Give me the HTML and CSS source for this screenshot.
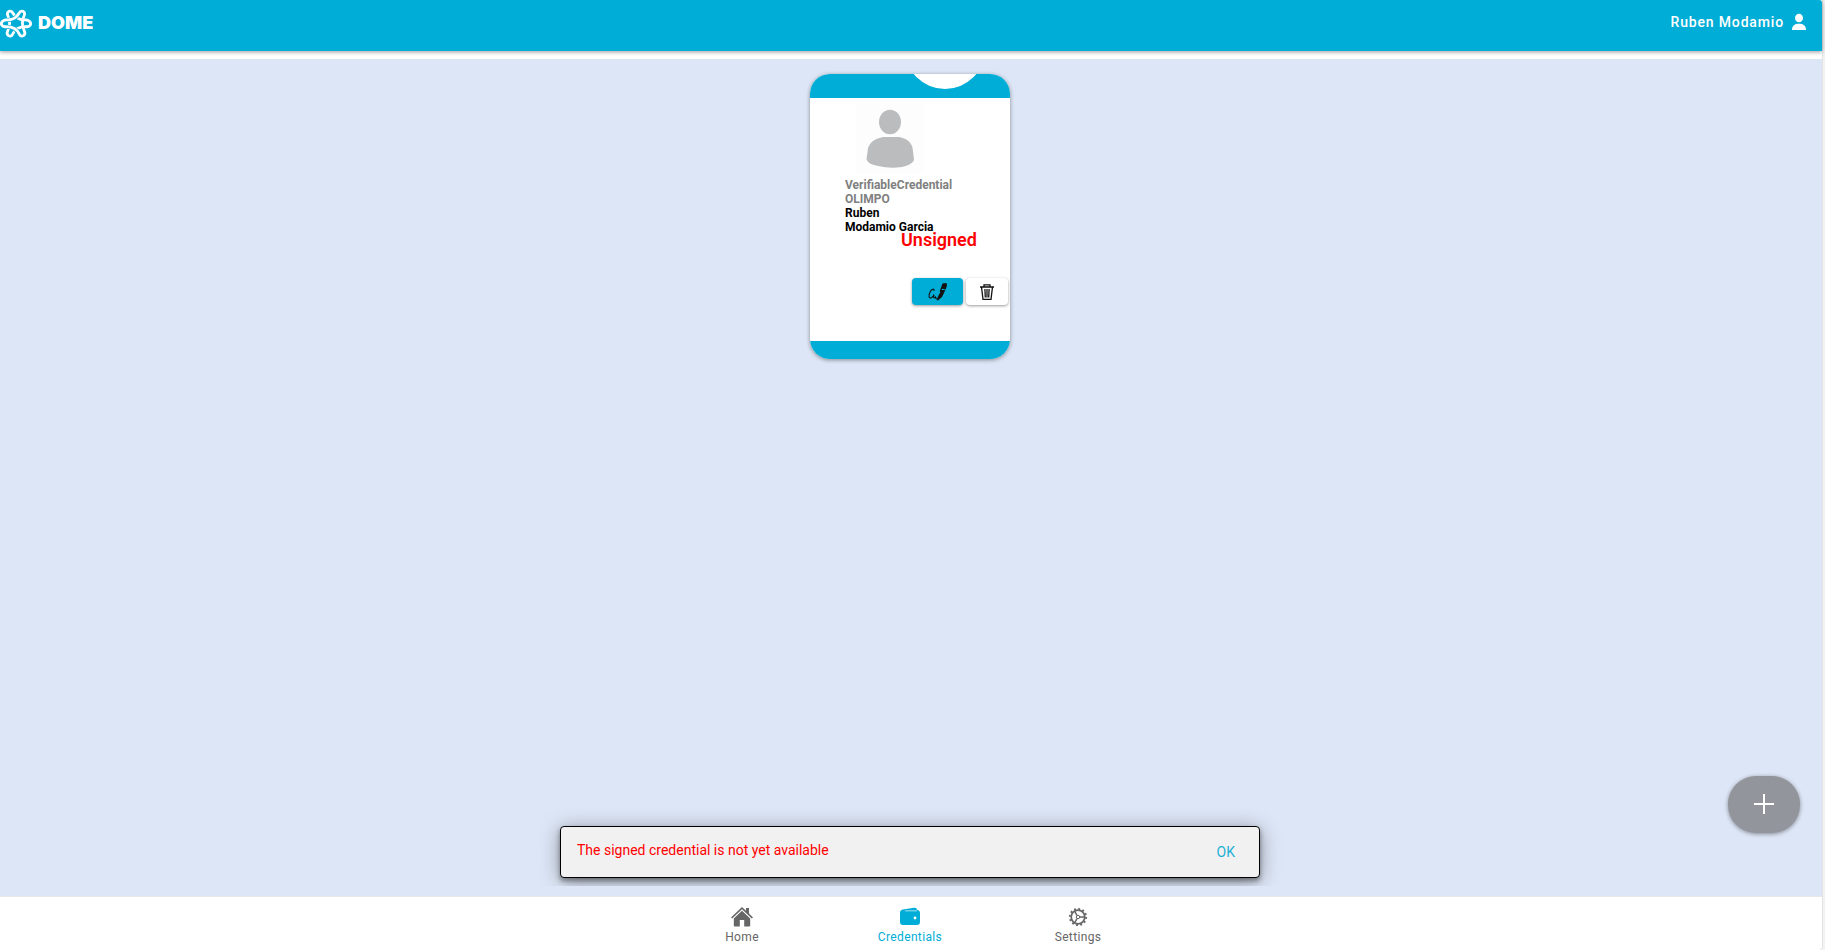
FILE: index.html
```html
<!DOCTYPE html>
<html lang="en">
<head>
<meta charset="utf-8">
<title>DOME Wallet</title>
<link rel="stylesheet" href="styles.css">
</head>
<body>
<div class="app">
  <header class="topbar">
    <a class="brand" href="#">
      <svg class="brand-mark" viewBox="0 -1 32 32" fill="none" stroke-linejoin="round">
        <g stroke="#fff" stroke-width="2.800">
          <path d="M28.500 12.600 Q31.500 14.500 30.300 17 Q29 19.200 26 18.600 Q16 18.500 12.800 26 Q11 29.200 8.500 27.600 Q6.300 26 7.600 23.300 Q11.500 15 7.800 7.500 Q6.600 4.300 9 3.300 Q11.700 2.500 13 5.300 Q17 12.500 25.500 11.800 Q27.500 11.800 28.500 12.600Z"/>
        </g>
        <g stroke="#00add6" stroke-width="4.200">
          <path d="M3.500 12.600 Q5 11.800 7 12 Q15.500 12 19 5.300 Q20.500 2.500 23 3.300 Q25.500 4.300 24.200 7.500"/>
          <path d="M24.400 23.300 Q25.700 26 23.500 27.600 Q21 29.200 19.200 26 Q16 19 6 18.600"/>
        </g>
        <g stroke="#fff" stroke-width="2.800">
          <path d="M3.500 12.600 Q.5 14.500 1.700 17 Q3 19.200 6 18.600 Q16 18.500 19.200 26 Q21 29.200 23.500 27.600 Q25.700 26 24.400 23.300 Q20.500 15 24.200 7.500 Q25.400 4.300 23 3.300 Q20.300 2.500 19 5.300 Q15 12.500 6.500 11.800 Q4.500 11.800 3.500 12.600Z"/>
        </g>
      </svg>
      <span>DOME</span>
    </a>
    <button class="user" type="button">
      <span>Ruben Modamio</span>
      <svg viewBox="0 0 16 18" width="16" height="18" fill="#fff"><ellipse cx="8" cy="5" rx="4" ry="4.300"/><path d="M1 17 C1 12.500 4 10.800 8 10.800 S15 12.500 15 17Z"/></svg>
    </button>
  </header>

  <main class="content">
    <article class="card">
      <div class="card-head"><span class="disc"></span></div>
      <div class="card-body">
        <svg class="avatar" viewBox="0 0 68 69" role="img" aria-label="Profile picture">
          <rect width="68" height="69" fill="#fdfdfd"/>
          <g fill="#bbbcbe"><ellipse cx="34" cy="18" rx="11" ry="12.200"/><path d="M27 33 H43 Q56 35 57 47 L58 56 Q56 61 46 63 Q34 65 22 62 Q11 60 10.500 55 L11.500 48 Q12 36 27 33Z"/></g>
        </svg>
        <p class="kind">VerifiableCredential</p>
        <p class="kind">OLIMPO</p>
        <p>Ruben</p>
        <p>Modamio Garcia</p>
        <strong class="status">Unsigned</strong>
        <div class="actions">
          <button class="sign" type="button" aria-label="Sign">
            <svg viewBox="0 0 20 20" width="20" height="20"><path fill="none" stroke="#111" stroke-width="1.100" d="M6 9 C6.500 6 3.500 7 2.300 9.500 C.5 13 .5 16.500 3 16 C5 15.500 6 12.500 6 12.500 C5 16 6 16.500 7.500 15 C8 17 9 17.500 10 16.500"/><path fill="#111" d="M14.500 1.500 L18.500 1 L19 3.500 L17.700 7.500 L14.200 6.800 L12.600 10 L11.600 9.500Z M13.600 7.700 L17.300 8.300 L14 15 L9.300 19 L9.700 15Z"/></svg>
          </button>
          <button class="trash" type="button" aria-label="Delete">
            <svg viewBox="0 0 16 18" width="16" height="18" fill="none" stroke="#111" stroke-width="1.300"><path d="M1 4 H15 M5 4 V1.800 H11 V4 M2.500 4 L4 16.300 H12 L13.500 4 M5.900 6 L6.300 14.500 M8 6 V14.500 M10.100 6 L9.700 14.500"/></svg>
          </button>
        </div>
      </div>
      <div class="card-foot"></div>
    </article>
    <button class="fab" type="button" aria-label="Add credential">
      <svg viewBox="0 0 20 20" width="20" height="20" stroke="#fff" stroke-width="2"><path d="M10 0V20M0 10H20"/></svg>
    </button>
    <div class="toast-area">
      <div class="toast" role="alert"><span>The signed credential is not yet available</span><button type="button">OK</button></div>
    </div>
  </main>

  <nav class="tabs">
    <a href="#">
      <svg viewBox="0 0 22 20" width="22" height="20" fill="#666"><path d="M11 0 L0 10.500 L1.200 11.600 L11 2.200 L20.800 11.600 L22 10.500 L18 6.600 V1 H15 V3.800Z"/><path d="M11 3.700 L2.800 11.500 V18.500 Q2.800 19.500 3.800 19.500 H8.800 V13 H13.200 V19.500 H18.200 Q19.200 19.500 19.200 18.500 V11.500Z"/></svg>
      <span>Home</span>
    </a>
    <a class="active" href="#">
      <svg viewBox="0 0 22 20" width="22" height="20"><path fill="#00add6" d="M1 6 Q1 3 4 2.600 L15 .8 Q17.800 .4 18.200 3 Q21 3.300 21 6 V15 Q21 18 18 18 H4 Q1 18 1 15Z"/><path d="M6 3.800 H18" stroke="#7fd5ea" stroke-width="1.300"/><circle cx="16" cy="11" r="1.400" fill="#fff"/></svg>
      <span>Credentials</span>
    </a>
    <a href="#">
      <svg viewBox="0 0 22 20" width="22" height="20" fill="none" stroke="#666"><circle cx="11" cy="10" r="6.800" stroke-width="1.700"/><circle cx="11" cy="10" r="8.200" stroke-width="1.800" stroke-dasharray="1.900 2.394"/><circle cx="11" cy="10" r="1.700" stroke-width="1"/><path d="M13 10 H18 M10 8.300 L7.600 4.100 M10 11.700 L7.600 15.900" stroke-width="1.400"/></svg>
      <span>Settings</span>
    </a>
  </nav>
</div>
</body>
</html>
```

FILE: styles.css
```css
* { box-sizing: border-box; }
body {
  margin: 0;
  padding-right: 3px;
  background: #f2f2f2;
  font-family: Roboto, "Liberation Sans", sans-serif;
  font-size: 12px;
}
p { margin: 0; }
button { margin: 0; border: 0; padding: 0; background: none; font: inherit; cursor: pointer; }
a { color: inherit; text-decoration: none; }
svg { display: block; }

.app {
  display: flex;
  flex-direction: column;
  height: 100vh;
  background: #fff;
  border-bottom-right-radius: 4px;
  box-shadow: 1px 0 0 #e4e4e4;
}
.topbar {
  display: flex;
  justify-content: space-between;
  align-items: flex-start;
  height: 51px;
  margin-bottom: 8px;
  padding-right: 15px;
  background: #00add6;
  color: #fff;
  box-shadow: 0 1px 4px rgba(0, 0, 0, .4);
  border-top-right-radius: 3px;
}
.brand {
  display: flex;
  align-items: center;
  gap: 6px;
  padding-top: 7px;
  font-family: Inter, sans-serif;
  font-size: 18px;
  font-weight: 900;
  line-height: 32px;
}
.brand-mark { width: 32px; height: 32px; }
.user {
  display: flex;
  align-items: center;
  gap: 7px;
  padding-top: 13px;
  color: #fff;
  font-size: 14px;
  font-weight: 500;
  letter-spacing: .06em;
  line-height: 18px;
}

.content {
  position: relative;
  flex: 1;
  padding: 15px 2px 0 0;
  background: #dde6f6;
}
.card {
  width: 200px;
  margin: 0 auto;
  overflow: hidden;
  border-radius: 20px;
  background: #fff;
  box-shadow: 0 1px 4px rgba(0, 0, 0, .4);
}
.card-head { position: relative; height: 24px; overflow: hidden; background: #00add6; }
.disc {
  position: absolute;
  bottom: 9px;
  right: 25px;
  width: 80px;
  height: 80px;
  border-radius: 50%;
  background: #fff;
}
.card-body {
  position: relative;
  height: 243px;
  padding: 6px 2px 0 35px;
  font-weight: 700;
  line-height: 14px;
}
.avatar { width: 68px; height: 69px; margin: 0 0 5px 11px; }
.kind { color: #808080; }
.status {
  position: absolute;
  top: 131px;
  left: 91px;
  color: #f00;
  font-size: 18px;
  font-weight: 600;
  line-height: 22px;
}
.actions {
  display: flex;
  justify-content: flex-end;
  gap: 3px;
  margin-top: 44px;
}
.sign, .trash {
  display: flex;
  align-items: center;
  justify-content: center;
  width: 51px;
  height: 27px;
  border-radius: 4px;
  background: #00add6;
  box-shadow: 0 1px 3px rgba(0, 0, 0, .4);
}
.trash { width: 42px; background: #fff; }
.card-foot { height: 18px; background: #00add6; }

.fab {
  position: absolute;
  right: 22px;
  bottom: 63px;
  display: flex;
  align-items: center;
  justify-content: center;
  width: 72px;
  height: 57px;
  padding-bottom: 1px;
  border-radius: 28px;
  background: #92959c;
  box-shadow: 0 1px 4px rgba(0, 0, 0, .4);
}
.toast-area {
  position: absolute;
  inset: auto 2px 10px 0;
  overflow: hidden;
  padding: 30px 20px 8px;
}
.toast {
  display: flex;
  align-items: center;
  justify-content: space-between;
  max-width: 700px;
  height: 52px;
  margin: 0 auto;
  padding: 0 24px 0 16px;
  border: 1px solid #000;
  border-radius: 4px;
  background: #f1f1f1;
  color: #f00;
  font-size: 14px;
  line-height: 20px;
  box-shadow: 0 3px 5px rgba(0, 0, 0, .4), 0 3px 20px rgba(0, 0, 0, .35);
}
.toast span { padding-bottom: 4px; }
.toast button { color: #1eb0d6; }

.tabs {
  display: flex;
  justify-content: center;
  height: 54px;
  padding-right: 2px;
  border-top: 1px solid #e6e8ec;
}
.tabs a {
  display: flex;
  flex-direction: column;
  align-items: center;
  width: 168px;
  padding-top: 10px;
  color: #666;
  letter-spacing: .03em;
  line-height: 16px;
}
.tabs span { padding-top: 2px; }
.tabs .active { color: #00add6; }
```
